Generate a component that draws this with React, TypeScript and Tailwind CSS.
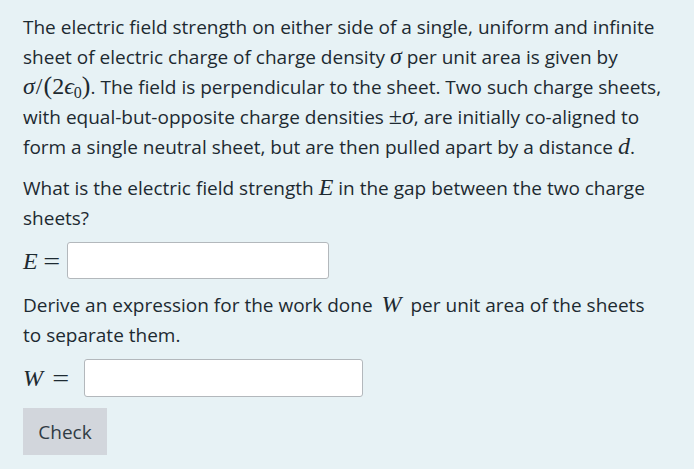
import React, { useState } from 'react';

const M: React.FC<{ children: React.ReactNode; className?: string }> = ({ children, className = '' }) => (
  <span className={`font-['Liberation_Serif','DejaVu_Serif',serif] text-[24px] leading-none ${className}`}>
    {children}
  </span>
);

const App: React.FC = () => {
  const [e, setE] = useState('');
  const [w, setW] = useState('');

  return (
    <div className="w-[694px] h-[469px] bg-[#e7f2f5] px-[23px] pt-[12px] font-['Open_Sans','Noto_Sans',sans-serif] text-[19px] leading-[30px] text-[#1d2a31]">
      <p className="whitespace-nowrap">
        The electric field strength on either side of a single, uniform and infinite
        <br />
        sheet of electric charge of charge density <M className="italic">σ</M> per unit area is given by
        <br />
        <M>
          <i>σ</i>
          <span className="mx-[1px]">/</span>
          <span className="text-[26px]">(</span>2<i>ϵ</i>
          <sub className="text-[16px] not-italic">0</sub>
          <span className="text-[26px]">)</span>
        </M>
        . The field is perpendicular to the sheet. Two such charge sheets,
        <br />
        with equal-but-opposite charge densities <M>±<i>σ</i></M>, are initially co-aligned to
        <br />
        form a single neutral sheet, but are then pulled apart by a distance <M className="italic">d</M>.
      </p>

      <p className="mt-[11px] whitespace-nowrap">
        What is the electric field strength <M className="italic">E</M> in the gap between the two charge
        <br />
        sheets?
      </p>

      <div className="mt-[9px] flex items-center gap-[9px]">
        <M className="flex items-center gap-[7px]">
          <i>E</i>
          <span className="scale-x-125">=</span>
        </M>
        <input
          value={e}
          onChange={(ev) => setE(ev.target.value)}
          className="w-[262px] h-[37px] bg-white border border-[#b3b8bc] rounded-[3px] px-2 outline-none"
        />
      </div>

      <p className="mt-[11px] whitespace-nowrap">
        Derive an expression for the work done <M className="italic mx-[4px]">W</M> per unit area of the sheets
        <br />
        to separate them.
      </p>

      <div className="mt-[9px] flex items-center gap-[16px]">
        <M className="flex items-center gap-[11px]">
          <i>W</i>
          <span className="scale-x-125">=</span>
        </M>
        <input
          value={w}
          onChange={(ev) => setW(ev.target.value)}
          className="w-[279px] h-[38px] bg-white border border-[#b3b8bc] rounded-[3px] px-2 outline-none"
        />
      </div>

      <button className="mt-[11px] w-[84px] h-[47px] bg-[#d2d6dc] text-[#303b44] text-[19px]">Check</button>
    </div>
  );
};

export default App;
